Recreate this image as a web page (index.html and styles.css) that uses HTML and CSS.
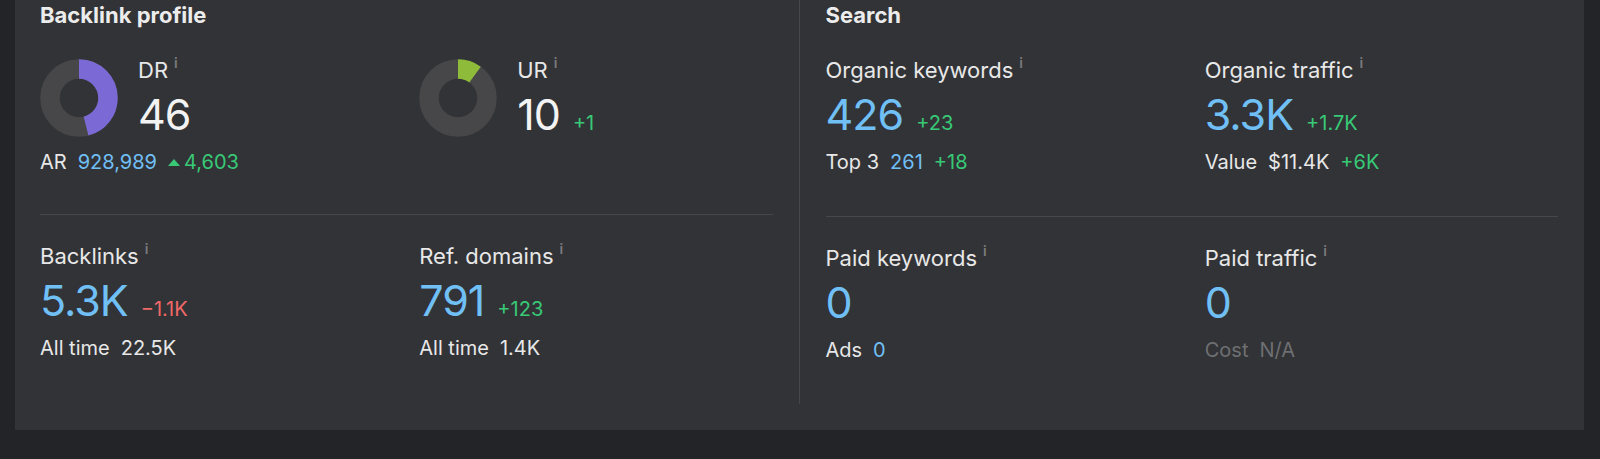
FILE: index.html
```html
<!DOCTYPE html>
<html lang="en">
<head>
<meta charset="utf-8">
<title>Overview</title>
<link rel="stylesheet" href="styles.css">
</head>
<body>
<div class="card">
  <div class="columns">
    <section class="panel">
      <div class="block block-top">
        <h2 class="title">Backlink profile</h2>
        <div class="grid2">
          <div class="metric">
            <div class="metric-main">
              <svg class="donut" width="78" height="78" viewBox="0 0 78 78">
                <circle cx="39" cy="39" r="29" fill="none" stroke="#474749" stroke-width="19.5"/>
                <circle cx="39" cy="39" r="29" fill="none" stroke="#7b6ad6" stroke-width="19.5" stroke-dasharray="83.8 200" transform="rotate(-90 39 39)"/>
              </svg>
              <div class="metric-text">
                <div class="label">DR<span class="info">i</span></div>
                <div class="value-row"><span class="value">46</span></div>
              </div>
            </div>
            <div class="sub">
              <span>AR</span>
              <span class="blue">928,989</span>
              <span class="green up"><i class="tri"></i>4,603</span>
            </div>
          </div>
          <div class="metric">
            <div class="metric-main">
              <svg class="donut" width="78" height="78" viewBox="0 0 78 78">
                <circle cx="39" cy="39" r="29" fill="none" stroke="#474749" stroke-width="19.5"/>
                <circle cx="39" cy="39" r="29" fill="none" stroke="#8fbb3a" stroke-width="19.5" stroke-dasharray="18.2 200" transform="rotate(-90 39 39)"/>
              </svg>
              <div class="metric-text">
                <div class="label">UR<span class="info">i</span></div>
                <div class="value-row"><span class="value">10</span><span class="delta green">+1</span></div>
              </div>
            </div>
          </div>
        </div>
      </div>
      <div class="block block-bottom">
        <div class="grid2">
          <div class="metric">
            <div class="label">Backlinks<span class="info">i</span></div>
            <div class="value-row"><span class="value blue">5.3K</span><span class="delta red">&minus;1.1K</span></div>
            <div class="sub"><span>All time</span><span>22.5K</span></div>
          </div>
          <div class="metric">
            <div class="label">Ref. domains<span class="info">i</span></div>
            <div class="value-row"><span class="value blue">791</span><span class="delta green">+123</span></div>
            <div class="sub"><span>All time</span><span>1.4K</span></div>
          </div>
        </div>
      </div>
    </section>
    <div class="vdivider"></div>
    <section class="panel">
      <div class="block block-top block-top-right">
        <h2 class="title">Search</h2>
        <div class="grid2">
          <div class="metric">
            <div class="label">Organic keywords<span class="info">i</span></div>
            <div class="value-row"><span class="value blue">426</span><span class="delta green">+23</span></div>
            <div class="sub"><span>Top 3</span><span class="blue">261</span><span class="green">+18</span></div>
          </div>
          <div class="metric">
            <div class="label">Organic traffic<span class="info">i</span></div>
            <div class="value-row"><span class="value blue">3.3K</span><span class="delta green">+1.7K</span></div>
            <div class="sub"><span>Value</span><span>$11.4K</span><span class="green">+6K</span></div>
          </div>
        </div>
      </div>
      <div class="block block-bottom">
        <div class="grid2">
          <div class="metric">
            <div class="label">Paid keywords<span class="info">i</span></div>
            <div class="value-row"><span class="value blue">0</span></div>
            <div class="sub"><span>Ads</span><span class="blue">0</span></div>
          </div>
          <div class="metric">
            <div class="label">Paid traffic<span class="info">i</span></div>
            <div class="value-row"><span class="value blue">0</span></div>
            <div class="sub muted"><span>Cost</span><span>N/A</span></div>
          </div>
        </div>
      </div>
    </section>
  </div>
</div>
</body>
</html>
```

FILE: styles.css
```css
* { box-sizing: border-box; }

html, body {
  margin: 0;
  padding: 0;
  background: #232427;
  height: 459px;
  overflow: hidden;
}

body {
  font-family: Inter, "Noto Sans", "Liberation Sans", sans-serif;
  color: #ececec;
}

.card {
  margin-left: 15px;
  width: 1569px;
  height: 430px;
  background: #323336;
  padding: 0 26px 26px 25px;
}

.columns {
  display: grid;
  grid-template-columns: 1fr 1px 1fr;
  column-gap: 26px;
  height: 404px;
}

.vdivider {
  background: #46474a;
}

.panel {
  display: flex;
  flex-direction: column;
}

.block-top {
  padding-top: 2px;
  padding-bottom: 40px;
  border-bottom: 1px solid #46474a;
}

.block-top-right {
  padding-bottom: 42px;
}

.block-bottom {
  padding-top: 28px;
}

.title {
  margin: 0 0 29px;
  font-size: 22px;
  line-height: 26px;
  font-weight: 700;
  color: #ececec;
}

.grid2 {
  display: grid;
  grid-template-columns: 1fr 1fr;
  column-gap: 26px;
}

.metric-main {
  display: flex;
  align-items: flex-start;
  gap: 20px;
}

.donut {
  display: block;
  flex: none;
  margin-top: 2px;
}

.label {
  font-size: 22px;
  line-height: 26px;
  color: #e8e8e8;
  white-space: nowrap;
}

.info {
  font-size: 14px;
  line-height: 0;
  margin-left: 6px;
  vertical-align: 10px;
  color: #7a7a7d;
  font-weight: 600;
}

.value-row {
  margin-top: 5px;
  display: flex;
  align-items: baseline;
  gap: 13px;
  height: 52px;
}

.value {
  font-size: 43px;
  line-height: 52px;
  font-weight: 400;
  letter-spacing: -1px;
  color: #f3f3f3;
}

.delta {
  font-size: 20px;
  line-height: 24px;
}

.sub {
  margin-top: 10px;
  display: flex;
  align-items: baseline;
  gap: 11px;
  font-size: 20px;
  line-height: 24px;
  color: #e8e8e8;
  white-space: nowrap;
}

.sub.muted {
  color: #6e6f72;
}

.blue { color: #70bff5; }
.green { color: #38c976; }
.red { color: #f06868; }

.up {
  display: inline-flex;
  align-items: baseline;
}

.tri {
  display: inline-block;
  width: 0;
  height: 0;
  border-left: 6px solid transparent;
  border-right: 6px solid transparent;
  border-bottom: 7px solid #38c976;
  margin-right: 4px;
  position: relative;
  top: -3px;
}
```
